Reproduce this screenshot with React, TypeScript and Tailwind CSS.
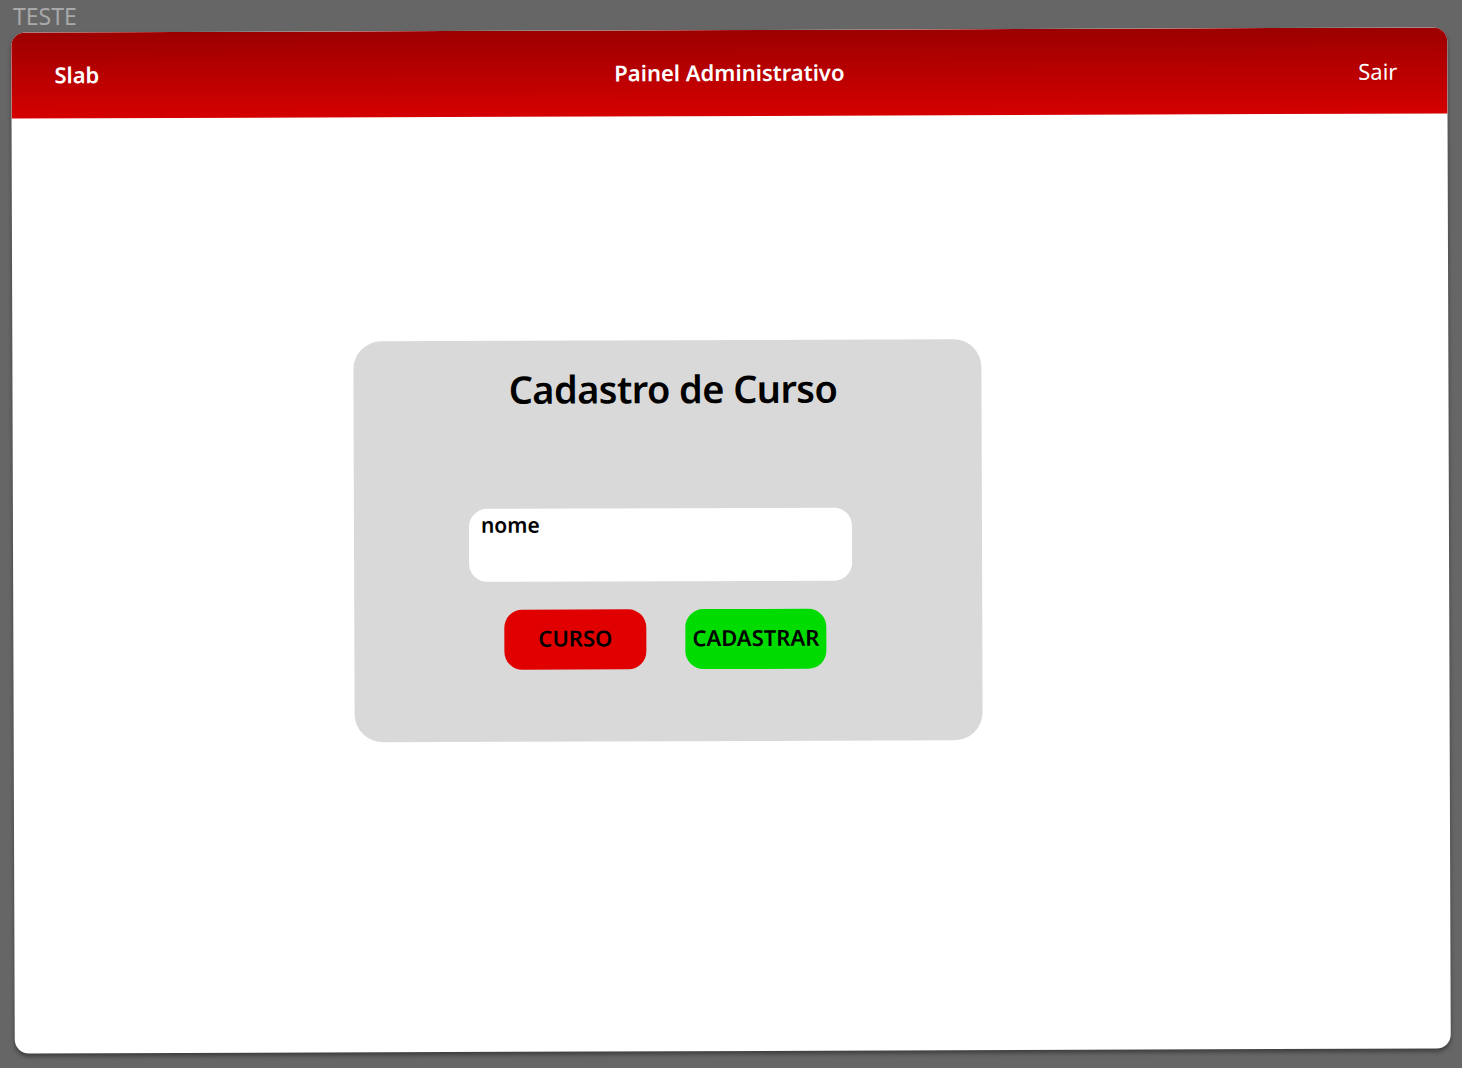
const App = () => {
  const font = { fontFamily: '"Noto Sans", "Open Sans", sans-serif' };

  return (
    <div className="min-h-screen w-full bg-[#666666] overflow-hidden" style={font}>
      <div className="h-[30px] pl-[13px] text-[23px] leading-[32px] text-[#a9a9a9]">
        TESTE
      </div>

      <div className="ml-[13px] w-[1436px] h-[1021px] rotate-[-0.2deg] bg-white rounded-[14px] overflow-hidden shadow-[0_3px_4px_rgba(0,0,0,0.4)]">
        <header className="h-[86px] bg-linear-to-b from-[#9c0000] to-[#d50000] grid grid-cols-[1fr_auto_1fr] items-center px-[43px] text-white text-[22px]">
          <div className="font-semibold -translate-y-[1px]">Slab</div>
          <div className="font-semibold -translate-y-[1px]">Painel Administrativo</div>
          <div className="text-right mr-[7px]">Sair</div>
        </header>

        <div className="pt-[224px] pl-[341px]">
          <div className="w-[628px] h-[401px] rounded-[28px] bg-[#d9d9d9] flex flex-col">
            <h1 className="mt-[24px] pl-[11px] text-center text-[38px] leading-[48px] font-semibold text-black tracking-[-0.6px]">
              Cadastro de Curso
            </h1>

            <div className="mt-[96px] ml-[115px] w-[383px] h-[73px] rounded-[18px] bg-white px-[12px] text-[21px] leading-[32px] font-semibold text-black">
              nome
            </div>

            <div className="mt-[28px] ml-[150px] flex gap-[39px]">
              <button className="w-[142px] h-[60px] rounded-[18px] bg-[#e00000] pb-[4px] text-[22px] font-semibold text-black">
                CURSO
              </button>
              <button className="w-[141px] h-[60px] rounded-[18px] bg-[#00dc00] pb-[4px] text-[22px] font-semibold text-black">
                CADASTRAR
              </button>
            </div>
          </div>
        </div>
      </div>
    </div>
  );
};

export default App;
